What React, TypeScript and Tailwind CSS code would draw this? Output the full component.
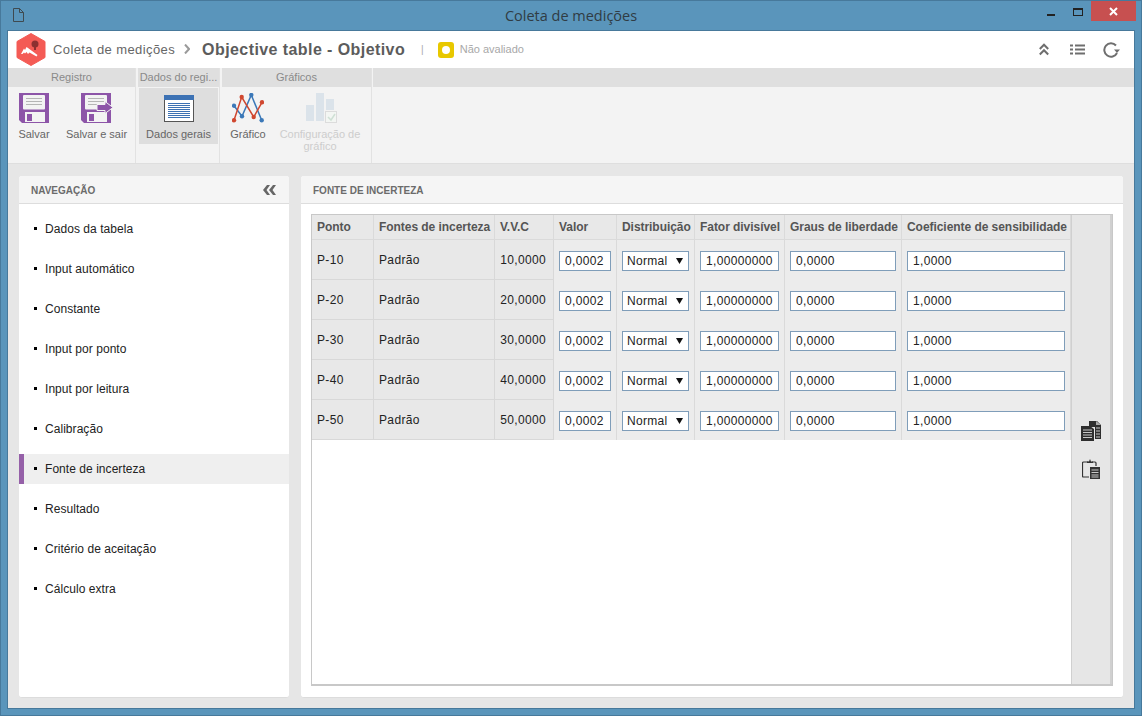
import React from "react";

const FONT = "[font-family:'Liberation_Sans',Arial,sans-serif]";

function Floppy({ arrow }: { arrow?: boolean }) {
  return (
    <svg width={arrow ? 32 : 30} height="30" viewBox={arrow ? "0 0 32 30" : "0 0 30 30"} className="block">
      <path d="M0 0h30v30H3l-3-3z" fill="#8d55a8" />
      <rect x="4" y="2" width="22" height="14.500" rx="1" fill="#f3f3f3" />
      <path d="M7 5.500h16M7 8.500h16M7 11.500h16" stroke="#b5b5b5" strokeWidth="1" />
      <rect x="6" y="19" width="20" height="10" fill="#f3f3f3" />
      <rect x="8" y="21" width="5" height="7" fill="#8d55a8" />
      {arrow && (
        <path d="M16 11.500h8V8.500l8 6-8 6v-3h-8z" fill="#8d55a8" stroke="#f3f3f3" strokeWidth="1" />
      )}
    </svg>
  );
}

function TableIcon() {
  return (
    <svg width="30" height="27" viewBox="0 0 30 27" className="block mb-px">
      <rect x="0.500" y="0.500" width="29" height="26" fill="#fff" stroke="#555" />
      <rect x="0" y="0" width="30" height="5" fill="#3d72b4" />
      <path d="M4 8.500h22M4 10.500h22M4 12.500h22M4 14.500h22M4 16.500h22M4 18.500h22M4 20.500h22M4 22.500h22" stroke="#3d72b4" strokeWidth="1" />
    </svg>
  );
}

function ChartIcon() {
  const blue = [[2, 12.7], [10, 23.3], [19.3, 2], [29.7, 27.3]];
  const red = [[2, 27.3], [9.7, 4], [21.7, 24], [30, 9.3]];
  return (
    <svg width="32" height="30" viewBox="0 0 32 30" className="block">
      <polyline points={blue.map((p) => p.join(",")).join(" ")} fill="none" stroke="#3b78b8" strokeWidth="1.500" />
      <polyline points={red.map((p) => p.join(",")).join(" ")} fill="none" stroke="#d0472f" strokeWidth="1.500" />
      {blue.map(([x, y]) => (
        <circle key={`${x}b`} cx={x} cy={y} r="2.200" fill="#3b78b8" />
      ))}
      {red.map(([x, y]) => (
        <circle key={`${x}r`} cx={x} cy={y} r="2.200" fill="#d0472f" />
      ))}
    </svg>
  );
}

function ChartConfigIcon() {
  return (
    <svg width="32" height="30" viewBox="0 0 32 30" className="block ml-[3px]">
      <rect x="0" y="12" width="8" height="16" fill="#dbe3ea" />
      <rect x="10" y="0" width="8" height="28" fill="#dbe3ea" />
      <rect x="20" y="6" width="8" height="11" fill="#dbe3ea" />
      <rect x="19.500" y="18.500" width="11" height="11" fill="#f3f6f3" stroke="#dcdcdc" />
      <path d="M22 24l3 3 4-6" fill="none" stroke="#cfe0d5" strokeWidth="1.500" />
    </svg>
  );
}

function Logo() {
  return (
    <svg width="30" height="33" viewBox="0 0 30 33" className="block">
      <path d="M15 0.500l14 8v16l-14 8-14-8v-16z" fill="#f45b55" stroke="#f45b55" strokeLinejoin="round" />
      <path d="M5 21l3-5.500 1 1.500 1.500-3 1.500 1 9.500 7-1 1.500-7-4-1.500 1.500-1.500-2-1.500 1.500-1-1-1.500 1.500z" fill="#fff" />
      <circle cx="19" cy="11" r="3.500" fill="#8c3030" />
      <rect x="18" y="13" width="2" height="4" fill="#8c3030" />
    </svg>
  );
}

function WindowDoc() {
  return (
    <svg width="11" height="14" viewBox="0 0 11 14" className="block">
      <path d="M0.500 0.500h6l4 4v9h-10z M6.500 0.500v4h4" fill="none" stroke="#3f4a50" />
    </svg>
  );
}

function DoubleUp() {
  return (
    <svg width="10" height="13" viewBox="0 0 10 13" className="block">
      <path d="M0.800 6L5 1.700 9.200 6M0.800 11.500L5 7.200l4.200 4.300" fill="none" stroke="#6e6e6e" strokeWidth="2" />
    </svg>
  );
}

function ListIcon() {
  return (
    <svg width="15" height="11" viewBox="0 0 15 11" className="block">
      <path d="M0 1.500h3M5 1.500h10M0 5.500h3M5 5.500h10M0 9.500h3M5 9.500h10" stroke="#6e6e6e" strokeWidth="2" />
    </svg>
  );
}

function RefreshIcon() {
  return (
    <svg width="18" height="16" viewBox="0 0 18 16" className="block">
      <path d="M14 3.500A6.700 6.700 0 1 0 15 11" fill="none" stroke="#6e6e6e" strokeWidth="2" />
      <path d="M12 7.500h6L15 11z" fill="#6e6e6e" />
    </svg>
  );
}

function DoubleLeft() {
  return (
    <svg width="14" height="10" viewBox="0 0 14 10" className="block">
      <path d="M5 0L1 5l4 5h3L4.500 5 8 0zM11 0L7 5l4 5h3L10.500 5 14 0z" fill="#666" />
    </svg>
  );
}

function CopyIcon() {
  return (
    <svg width="20" height="20" viewBox="0 0 20 20" className="block">
      <path d="M8 0h8l4 4v14h-6V6H8z" fill="#2e2e2e" />
      <path d="M15 0l5 4h-5z" fill="#aaa" />
      <path d="M15 7h4M15 10h4M15 13h4M15 16h4" stroke="#c8c8c8" strokeWidth="1" />
      <path d="M0 5h9l4 3v12H0z" fill="#2e2e2e" />
      <path d="M2 9h9M2 11.500h9M2 14h9M2 16.500h9" stroke="#c8c8c8" strokeWidth="1" />
    </svg>
  );
}

function PasteIcon() {
  return (
    <svg width="18" height="20" viewBox="0 0 18 20" className="block">
      <path d="M6.500 3H1.500a1 1 0 0 0-1 1v13a1 1 0 0 0 1 1H7" fill="none" stroke="#333" strokeWidth="1.200" />
      <path d="M10 3h3a1 1 0 0 1 1 1v3" fill="none" stroke="#333" strokeWidth="1.200" />
      <path d="M5 4V2.500h2L8 0l1 2.500h2V4z" fill="#333" />
      <rect x="8" y="8" width="10" height="12" fill="#333" />
      <path d="M9.500 11h7M9.500 13.500h7M9.500 16h7M9.500 18h7" stroke="#c8c8c8" strokeWidth="1" />
    </svg>
  );
}

function RibbonButton({
  icon,
  label,
  width,
  active,
  disabled,
}: {
  icon: React.ReactNode;
  label: string;
  width: string;
  active?: boolean;
  disabled?: boolean;
}) {
  return (
    <div className={`${width} flex flex-col items-center ${active ? "h-[56px] bg-[#dedede]" : ""}`}>
      <div className="h-[35px] flex items-end justify-center">{icon}</div>
      <div
        className={`mt-[5px] text-[11px] leading-[12px] text-center ${
          disabled ? "text-[#cdcdcd]" : "text-[#666666]"
        }`}
      >
        {label}
      </div>
    </div>
  );
}

function Group({
  title,
  width,
  children,
}: {
  title: string;
  width: string;
  children: React.ReactNode;
}) {
  return (
    <div className={`${width} shrink-0 flex flex-col border-r border-[#e2e2e2]`}>
      <div className="h-[19px] bg-[#dfdfdf] text-[11px] leading-[19px] text-center text-[#8a8a8a] whitespace-nowrap overflow-hidden">
        {title}
      </div>
      <div className="flex-1 flex pt-px">{children}</div>
    </div>
  );
}

const NAV = [
  "Dados da tabela",
  "Input automático",
  "Constante",
  "Input por ponto",
  "Input por leitura",
  "Calibração",
  "Fonte de incerteza",
  "Resultado",
  "Critério de aceitação",
  "Cálculo extra",
];

const COLS = [
  "Ponto",
  "Fontes de incerteza",
  "V.V.C",
  "Valor",
  "Distribuição",
  "Fator divisível",
  "Graus de liberdade",
  "Coeficiente de sensibilidade",
];

const ROWS = [
  ["P-10", "10,0000"],
  ["P-20", "20,0000"],
  ["P-30", "30,0000"],
  ["P-40", "40,0000"],
  ["P-50", "50,0000"],
];

function Field({ value, width }: { value: string; width: string }) {
  return (
    <input
      readOnly
      value={value}
      className={`${width} h-5 border border-[#7f9db9] bg-white px-[5px] text-[12px] tracking-[0.35px] text-[#222222] outline-none`}
    />
  );
}

export default function App() {
  return (
    <div
      className={`${FONT} w-[1142px] h-[716px] overflow-hidden flex flex-col bg-[#5a95bb] border border-[#47799b]`}
    >
      {/* Title bar */}
      <div className="h-[29px] shrink-0 flex items-center text-[#2d3a42]">
        <div className="w-[44px] pl-[12px] -mt-[1px] shrink-0">
          <WindowDoc />
        </div>
        <div className="flex-1 pl-[50px] text-center text-[14.5px] font-['Open_Sans',sans-serif] text-[#303c44]">
          Coleta de medições
        </div>
        <div className="flex items-start self-start h-[21px] shrink-0 mr-[5px]">
          <div className="w-[8px] h-[2px] bg-[#222] mt-[13px] mr-[18px]" />
          <div className="w-[10px] h-[8px] border border-t-[2px] border-[#222] mt-[7px] mr-[8px]" />
          <div className="w-[45px] h-[20px] bg-[#c75050] flex items-center justify-center">
            <svg width="9" height="9" viewBox="0 0 9 9">
              <path d="M1 1l7 7M8 1L1 8" stroke="#fff" strokeWidth="2" />
            </svg>
          </div>
        </div>
      </div>

      {/* Inner window */}
      <div className="mx-[6px] mb-[6px] flex-1 min-h-0 flex flex-col border border-[#47799b] bg-[#e6e6e6]">
        {/* Header */}
        <div className="h-[37px] shrink-0 bg-white flex items-center pl-[8px] pr-[14px]">
          <Logo />
          <div className="ml-[7px] text-[13px] tracking-[0.4px] text-[#666666]">Coleta de medições</div>
          <svg width="6" height="10" viewBox="0 0 6 10" className="ml-[9px] mt-[-2px]">
            <path d="M1 0.500L5 5 1 9.500" fill="none" stroke="#9a9a9a" strokeWidth="2" />
          </svg>
          <div className="ml-[12px] text-[16px] font-bold tracking-[0.42px] text-[#5c5c5c]">
            Objective table - Objetivo
          </div>
          <div className="ml-[16px] text-[10px] text-[#aaaaaa]">|</div>
          <div className="ml-[14px] w-[16px] h-[16px] rounded-[3px] bg-[#e8c800] flex items-center justify-center">
            <div className="w-[8px] h-[8px] rounded-full bg-white" />
          </div>
          <div className="ml-[6px] text-[11px] text-[#a8a8a8]">Não avaliado</div>
          <div className="ml-auto flex items-center">
            <DoubleUp />
            <div className="w-[21px]" />
            <ListIcon />
            <div className="w-[17px]" />
            <RefreshIcon />
          </div>
        </div>

        {/* Ribbon */}
        <div className="h-[96px] shrink-0 flex gap-[2px] bg-[#f3f3f3] border-b border-[#dedede]">
          <Group title="Registro" width="w-[128px]">
            <RibbonButton width="w-[52px]" icon={<Floppy />} label="Salvar" />
            <RibbonButton width="w-[73px]" icon={<Floppy arrow />} label="Salvar e sair" />
          </Group>
          <Group title="Dados do regi..." width="w-[82px]">
            <div className="pl-px">
              <RibbonButton width="w-[79px]" active icon={<TableIcon />} label="Dados gerais" />
            </div>
          </Group>
          <Group title="Gráficos" width="w-[150px]">
            <RibbonButton width="w-[52px]" icon={<ChartIcon />} label="Gráfico" />
            <RibbonButton
              width="w-[92px]"
              disabled
              icon={<ChartConfigIcon />}
              label="Configuração de gráfico"
            />
          </Group>
          <div className="flex-1 flex flex-col -ml-px">
            <div className="h-[19px] bg-[#dfdfdf]" />
          </div>
        </div>

        {/* Content */}
        <div className="flex-1 min-h-0 flex gap-[12px] pt-[12px] pb-[10px] px-[11px]">
          {/* Navigation */}
          <div className="w-[270px] shrink-0 flex flex-col bg-white rounded-[3px] border-b border-[#dcdcdc]">
            <div className="h-[28px] shrink-0 flex items-center justify-between pt-px pl-[12px] pr-[13px] bg-[#f5f5f5] border-b border-[#dddddd] rounded-t-[3px]">
              <span className="text-[10px] font-bold text-[#6b6b6b]">NAVEGAÇÃO</span>
              <DoubleLeft />
            </div>
            <div className="pt-[5px]">
              {NAV.map((item) => {
                const active = item === "Fonte de incerteza";
                return (
                  <div key={item} className="h-[40px] flex items-center">
                    <div
                      className={`h-[30px] w-full flex items-center ${
                        active
                          ? "bg-[#efefef] border-l-[5px] border-[#9560a8] pl-[10px]"
                          : "pl-[15px]"
                      }`}
                    >
                      <span className="w-[3px] h-[3px] bg-black mr-[8px] -mt-[1px]" />
                      <span className="text-[12px] tracking-[0.05px] text-[#222222]">{item}</span>
                    </div>
                  </div>
                );
              })}
            </div>
          </div>

          {/* Main panel */}
          <div className="flex-1 min-w-0 flex flex-col bg-white rounded-[3px] border-b border-[#dcdcdc]">
            <div className="h-[28px] shrink-0 flex items-center pt-px pl-[12px] bg-[#f5f5f5] border-b border-[#dddddd] rounded-t-[3px]">
              <span className="text-[10px] font-bold text-[#6b6b6b]">FONTE DE INCERTEZA</span>
            </div>
            <div className="flex-1 min-h-0 pt-[10px] pb-[11px] px-[10px] flex">
              <div className="flex-1 flex border border-[#c8c8c8] border-b-2">
                <div className="w-[759px] shrink-0">
                  <div className="grid grid-cols-[62px_121px_59px_63px_78px_90px_117px_169px] grid-rows-[25px_repeat(5,40px)]">
                    {COLS.map((c) => (
                      <div
                        key={c}
                        className="bg-[#e8e8e8] border-r border-b border-[#dadada] pl-[5px] flex items-center text-[12px] font-bold tracking-[-0.05px] text-[#555555] whitespace-nowrap overflow-hidden"
                      >
                        {c}
                      </div>
                    ))}
                    {ROWS.map(([p, vvc]) => (
                      <React.Fragment key={p}>
                        <div className="bg-[#e8e8e8] border-r border-b border-[#d8d8d8] pl-[5px] flex items-center text-[12px] tracking-[0.35px] text-[#222222]">
                          {p}
                        </div>
                        <div className="bg-[#e8e8e8] border-r border-b border-[#d8d8d8] pl-[5px] flex items-center text-[12px] tracking-[0.35px] text-[#222222]">
                          Padrão
                        </div>
                        <div className="bg-[#e8e8e8] border-r border-b border-[#d8d8d8] pr-[7px] flex items-center justify-end text-[12px] tracking-[0.35px] text-[#222222]">
                          {vvc}
                        </div>
                        <div className="bg-[#ececec] border-r border-[#dadada] pl-[5px] pt-[2px] flex items-center">
                          <Field value="0,0002" width="w-[52px]" />
                        </div>
                        <div className="bg-[#ececec] border-r border-[#dadada] pl-[5px] pt-[2px] flex items-center">
                          <div className="w-[67px] h-5 border border-[#7f9db9] bg-white pl-[4px] pr-[5px] flex items-center justify-between text-[12px] tracking-[0.3px] text-[#222222]">
                            <span>Normal</span>
                            <svg width="7" height="6" viewBox="0 0 7 6" className="block -mt-px">
                              <path d="M0 0h7L3.500 6z" fill="#111" />
                            </svg>
                          </div>
                        </div>
                        <div className="bg-[#ececec] border-r border-[#dadada] pl-[5px] pt-[2px] flex items-center">
                          <Field value="1,00000000" width="w-[79px]" />
                        </div>
                        <div className="bg-[#ececec] border-r border-[#dadada] pl-[5px] pt-[2px] flex items-center">
                          <Field value="0,0000" width="w-[106px]" />
                        </div>
                        <div className="bg-[#ececec] border-r border-[#dadada] pl-[5px] pt-[2px] flex items-center">
                          <Field value="1,0000" width="w-[158px]" />
                        </div>
                      </React.Fragment>
                    ))}
                  </div>
                </div>
                <div className="flex-1 flex flex-col items-center justify-center gap-[18px] bg-[#e6e6e6] border-l border-r-2 border-[#d0d0d0]">
                  <CopyIcon />
                  <PasteIcon />
                </div>
              </div>
            </div>
          </div>
        </div>
      </div>
    </div>
  );
}
